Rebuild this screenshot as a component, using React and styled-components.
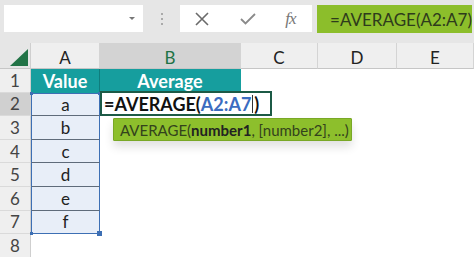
import React from 'react'
import styled, {createGlobalStyle} from 'styled-components'

const Global = createGlobalStyle`
  html, body {
    margin: 0;
    padding: 0;
    background: #fff;
    font-family: Lato, "Open Sans", sans-serif;
  }
`

const Page = styled.div`
  width: 474px;
  height: 257px;
  overflow: hidden;
  background: #fff;
`

const Toolbar = styled.div`
  display: flex;
  align-items: flex-start;
  height: 43px;
  padding: 5px 2px 0 4px;
  box-sizing: border-box;
  background: #e6e6e6;
`

const NameBox = styled.div`
  width: 139px;
  height: 27px;
  background: #fff;
  display: flex;
  align-items: center;
  justify-content: flex-end;
  padding-right: 8px;
  box-sizing: border-box;
`

const Arrow = styled.div`
  width: 0;
  height: 0;
  border-left: 3px solid transparent;
  border-right: 3px solid transparent;
  border-top: 3px solid #777;
`

const Dots = styled.div`
  width: 38px;
  height: 27px;
  display: flex;
  flex-direction: column;
  align-items: center;
  justify-content: center;
  gap: 3px;

  span {
    width: 2px;
    height: 2px;
    background: #aaa;
  }
`

const FuncBox = styled.div`
  width: 132px;
  height: 27px;
  background: #fff;
  display: flex;
  align-items: center;
`

const FuncIcon = styled.div`
  width: ${({w}) => w}px;
  display: flex;
  justify-content: center;
  align-items: center;
`

const Fx = styled.span`
  font-family: "Liberation Serif", serif;
  font-style: italic;
  font-size: 17px;
  color: #777;
  letter-spacing: -1px;
`

const FormulaBar = styled.div`
  margin-left: 5px;
  width: 155px;
  height: 28px;
  background: #8cbe2b;
  color: #2e3b1c;
  font-size: 17px;
  display: flex;
  align-items: center;
  padding-left: 13px;
  box-sizing: border-box;
  white-space: nowrap;
`

const Sheet = styled.div`
  position: relative;
  display: grid;
  grid-template-columns: 31px 69px 141px 77px 79px 77px;
  grid-template-rows: 26px repeat(8, 23.6px);
  font-size: 17px;
`

const Corner = styled.div`
  background: #e6e6e6;
  border-right: 1px solid #cfcfcf;
  border-bottom: 1px solid #c6c6c6;
  display: flex;
  align-items: flex-end;
  justify-content: flex-end;
  padding: 0 2px 2px 0;
`

const ColHead = styled.div`
  background: ${({$selected}) => ($selected ? '#d3d3d3' : '#efefef')};
  color: ${({$selected}) => ($selected ? '#217346' : '#222')};
  border-right: 1px solid #d4d4d4;
  border-bottom: 1px solid #c6c6c6;
  display: flex;
  align-items: center;
  justify-content: center;
  padding-top: 3px;
  box-sizing: border-box;
`

const RowHead = styled.div`
  background: ${({$selected}) => ($selected ? '#d0d0d0' : '#efefef')};
  color: #444;
  border-right: 1px solid #cfcfcf;
  border-bottom: 1px solid #dadada;
  display: flex;
  align-items: center;
  justify-content: center;
  box-sizing: border-box;
`

const TitleCell = styled.div`
  background: #169e9e;
  color: #fff;
  font-weight: 700;
  font-size: 18px;
  display: flex;
  align-items: center;
  justify-content: center;
  border-right: 1px solid ${({$last}) => ($last ? '#169e9e' : '#0f7d7d')};
`

const DataCell = styled.div`
  position: relative;
  background: #e8eef8;
  color: #222;
  display: flex;
  align-items: center;
  justify-content: center;
  border-left: 1px solid #3d6fb4;
  border-right: 1px solid #3d6fb4;
  border-top: ${({$first}) => ($first ? '1px solid #3d6fb4' : 'none')};
  border-bottom: 1px solid ${({$last}) => ($last ? '#3d6fb4' : '#5f6b7a')};
  box-sizing: border-box;
`

const Handle = styled.span`
  position: absolute;
  width: ${({$big}) => ($big ? 5 : 3)}px;
  height: ${({$big}) => ($big ? 5 : 3)}px;
  background: #3d6fb4;
  ${({$pos}) => $pos}
`

const Blank = styled.div``

const Editor = styled.div`
  position: absolute;
  left: 100px;
  top: 48px;
  width: 172px;
  height: 25px;
  border: 2px solid #1c5a46;
  background: #fff;
  box-sizing: border-box;
  display: flex;
  align-items: center;
  padding-left: 2px;
  font-weight: 700;
  font-size: 18px;
  color: #111;
  white-space: nowrap;
`

const Ref = styled.span`
  color: #3b6cc0;
`

const Caret = styled.span`
  display: inline-block;
  width: 1px;
  height: 18px;
  background: #333;
  margin: 0 1px;
`

const Tip = styled.div`
  position: absolute;
  left: 113px;
  top: 75px;
  width: 239px;
  height: 23px;
  background: #8dbf2c;
  border: 1px solid #79a826;
  border-radius: 1px;
  box-sizing: border-box;
  box-shadow: 0 6px 10px rgba(0, 0, 0, 0.12);
  color: #33421c;
  font-size: 15px;
  display: flex;
  align-items: center;
  padding-left: 6px;
  white-space: nowrap;

  b {
    font-weight: 700;
    color: #222;
  }
`

const cols = ['A', 'B', 'C', 'D', 'E']
const values = ['a', 'b', 'c', 'd', 'e', 'f']

export default function App() {
  return (
    <Page>
      <Global />
      <Toolbar>
        <NameBox>
          <Arrow />
        </NameBox>
        <Dots>
          <span />
          <span />
          <span />
        </Dots>
        <FuncBox>
          <FuncIcon w={44}>
            <svg width="14" height="14" viewBox="0 0 14 14">
              <path d="M1 1L13 13M13 1L1 13" stroke="#6a6a6a" strokeWidth="1.6" fill="none" />
            </svg>
          </FuncIcon>
          <FuncIcon w={48}>
            <svg width="16" height="12" viewBox="0 0 16 12">
              <path d="M1 6L5.5 10.5L15 1" stroke="#8a8a8a" strokeWidth="1.8" fill="none" />
            </svg>
          </FuncIcon>
          <FuncIcon w={36}>
            <Fx>fx</Fx>
          </FuncIcon>
        </FuncBox>
        <FormulaBar>=AVERAGE(A2:A7)</FormulaBar>
      </Toolbar>
      <Sheet>
        <Corner>
          <svg width="18" height="17" viewBox="0 0 18 17">
            <path d="M0 17L18 0V17Z" fill="#217346" />
          </svg>
        </Corner>
        {cols.map(c => (
          <ColHead key={c} $selected={c === 'B'}>
            {c}
          </ColHead>
        ))}

        <RowHead>1</RowHead>
        <TitleCell>Value</TitleCell>
        <TitleCell $last>Average</TitleCell>
        <Blank />
        <Blank />
        <Blank />

        {values.map((v, i) => (
          <React.Fragment key={v}>
            <RowHead $selected={i === 0}>{i + 2}</RowHead>
            <DataCell $first={i === 0} $last={i === values.length - 1}>
              {v}
              {i === 0 && <Handle $pos="left: -2px; top: -2px;" />}
              {i === 0 && <Handle $pos="right: -2px; top: -2px;" />}
              {i === values.length - 1 && <Handle $pos="left: -2px; bottom: -2px;" />}
              {i === values.length - 1 && <Handle $big $pos="right: -3px; bottom: -3px;" />}
            </DataCell>
            <Blank />
            <Blank />
            <Blank />
            <Blank />
          </React.Fragment>
        ))}

        <RowHead>8</RowHead>
        <Blank />
        <Blank />
        <Blank />
        <Blank />
        <Blank />

        <Editor>
          =AVERAGE(<Ref>A2:A7</Ref>
          <Caret />)
        </Editor>
        <Tip>
          AVERAGE(<b>number1</b>, [number2], ...)
        </Tip>
      </Sheet>
    </Page>
  )
}
